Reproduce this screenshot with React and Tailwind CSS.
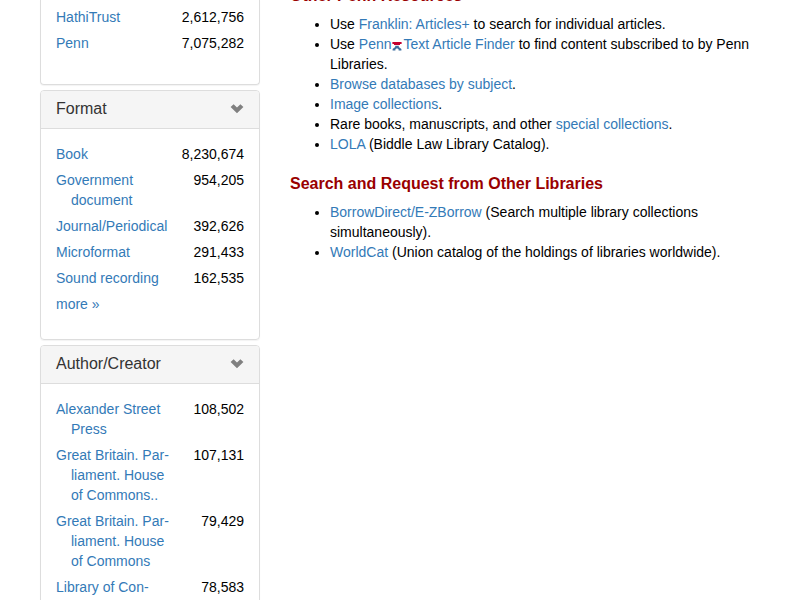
import React from "react";

const sources = [
  ["HathiTrust", "2,612,756"],
  ["Penn", "7,075,282"],
];

const formats = [
  ["Book", "8,230,674"],
  ["Government document", "954,205"],
  ["Journal/Periodical", "392,626"],
  ["Microformat", "291,433"],
  ["Sound recording", "162,535"],
];

const authors = [
  ["Alexander Street Press", "108,502"],
  ["Great Britain. Par\u00ADliament. House of Commons..", "107,131"],
  ["Great Britain. Par\u00ADliament. House of Commons", "79,429"],
  ["Library of Con\u00ADgress", "78,583"],
];

function Link({ children }) {
  return (
    <a href="#" className="text-[#337ab7] hover:underline">
      {children}
    </a>
  );
}

function Chevron() {
  return (
    <svg viewBox="0 0 14 10" className="h-[10px] w-[14px]" fill="#808080" aria-hidden="true">
      <path d="M3.6 0.2 L7 3.6 L10.4 0.2 L13.4 2.9 L7 9.2 L0.6 2.9 Z" />
    </svg>
  );
}

function FacetTable({ rows, label }) {
  return (
    <table className="w-full" aria-label={label}>
      <tbody>
        {rows.map(([name, count]) => (
          <tr key={name} className="align-top">
            <td className="py-[3px] pl-[15px] -indent-[15px] hyphens-manual">
              <Link>{name}</Link>
            </td>
            <td className="w-[72px] py-[3px] text-right">{count}</td>
          </tr>
        ))}
      </tbody>
    </table>
  );
}

function Facet({ title, rows, more }) {
  return (
    <section className="overflow-hidden rounded border border-[#dddddd] shadow-[0_1px_1px_rgba(0,0,0,0.05)]">
      <h3 className="border-b border-[#dddddd] bg-[#f5f5f5] text-base text-[#333333]">
        <button type="button" className="flex h-[37px] w-full items-center justify-between px-[15px] pb-[2px]">
          {title}
          <Chevron />
        </button>
      </h3>
      <div className="px-[15px] pt-3 pb-[22px]">
        <FacetTable rows={rows} label={title} />
        {more && (
          <p className="py-[3px]">
            <Link>more »</Link>
          </p>
        )}
      </div>
    </section>
  );
}

/* Pennant mark between "Penn" and "Text" */
function PennMark() {
  return (
    <svg viewBox="0 0 10 9" className="mr-[2px] -mb-[2px] inline-block h-[9px] w-[10px] align-baseline" aria-hidden="true">
      <path d="M0.4 0h9.2v2H8v1.1H2V2H0.4z" fill="#c4002f" />
      <path d="M3.2 3.8h3.6v1.3l2.6 1.9v1.4H6.6V7.2L5 6.3 3.4 7.2v1.2H0.6V7l2.6-1.9z" fill="#3d6fa0" />
    </svg>
  );
}

function Heading({ children }) {
  return <h2 className="mb-2 text-base leading-5 font-bold text-[#990000]">{children}</h2>;
}

function List({ children }) {
  return <ul className="mb-5 list-disc pl-10">{children}</ul>;
}

export default function App() {
  return (
    <div className="flex h-screen gap-[30px] overflow-hidden bg-white px-10 font-['Liberation_Sans',Arial,sans-serif] text-sm leading-5 text-black">
      <aside className="flex w-[220px] shrink-0 flex-col gap-[5px]">
        <section className="shrink-0 rounded-b border border-t-0 border-[#dddddd] px-[15px] pt-1 pb-7 shadow-[0_1px_1px_rgba(0,0,0,0.05)]">
          <FacetTable rows={sources} label="Source" />
        </section>
        <div className="flex shrink-0 flex-col gap-[5px]">
          <Facet title="Format" rows={formats} more />
          <Facet title="Author/Creator" rows={authors} />
        </div>
      </aside>

      <main className="-mt-[14px] min-w-0 flex-1">
        <Heading>Other Penn Resources</Heading>
        <List>
          <li>
            Use <Link>Franklin: Articles+</Link> to search for individual articles.
          </li>
          <li>
            Use <Link>Penn<PennMark />Text Article Finder</Link> to find content subscribed to by Penn Libraries.
          </li>
          <li>
            <Link>Browse databases by subject</Link>.
          </li>
          <li>
            <Link>Image collections</Link>.
          </li>
          <li>
            Rare books, manuscripts, and other <Link>special collections</Link>.
          </li>
          <li>
            <Link>LOLA</Link> (Biddle Law Library Catalog).
          </li>
        </List>
        <Heading>Search and Request from Other Libraries</Heading>
        <List>
          <li>
            <Link>BorrowDirect/E-ZBorrow</Link> (Search multiple library collections simultaneously).
          </li>
          <li>
            <Link>WorldCat</Link> (Union catalog of the holdings of libraries worldwide).
          </li>
        </List>
      </main>
    </div>
  );
}
